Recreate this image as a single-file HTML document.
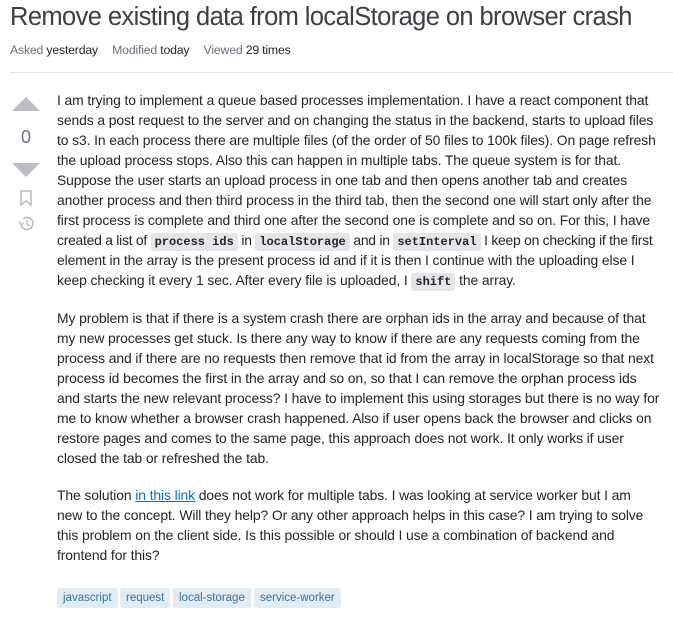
<!DOCTYPE html>
<html><head><meta charset="utf-8"><style>
body{margin:0;background:#fff;width:673px;height:620px;overflow:hidden;font-family:"Liberation Sans",sans-serif;color:#232629}
h1{position:absolute;left:10px;top:3px;margin:0;font-weight:normal;font-size:25.5px;color:#3b4045;white-space:nowrap;letter-spacing:-0.6px}
.meta{position:absolute;left:10px;top:43px;font-size:12.3px;color:#6a737c;white-space:nowrap;letter-spacing:-0.2px}
.meta b{font-weight:normal;color:#232629;margin-right:11px}
.hr{position:absolute;left:10px;top:72px;width:663px;height:1px;background:#e3e6e8}
.post{position:absolute;left:57px;width:620px;font-size:13.9px;line-height:20px;white-space:nowrap;letter-spacing:-0.1px}
code{font-family:"Liberation Mono",monospace;font-size:12px;line-height:1;background:#e3e6e8;padding:2px 4px;border-radius:3px;color:#232629;font-weight:bold;letter-spacing:0}
a{color:#0074cc;text-decoration:underline}
.tag{position:absolute;top:588px;height:20px;line-height:20px;background:#e1ecf4;color:#39739d;font-size:11.5px;padding:0 6px;border-radius:3px}
</style></head><body>
<h1>Remove existing data from localStorage on browser crash</h1>
<div class="meta">Asked <b>yesterday</b> Modified <b>today</b> Viewed <b>29 times</b></div>
<div class="hr"></div>
<svg style="position:absolute;left:10px;top:95px" width="34" height="140">
<path d="M2 16 L16 2 L30 16Z" fill="#babfc4"/>
<text x="16" y="48" font-size="18" fill="#6a737c" text-anchor="middle" font-family="Liberation Sans">0</text>
<path d="M2 68 L16 82 L30 68Z" fill="#babfc4"/>
<path d="M11 96 h10 v14 l-5 -4 l-5 4Z" fill="none" stroke="#babfc4" stroke-width="1.6"/>
<path d="M11 129 a6 6 0 1 0 2 -5" fill="none" stroke="#babfc4" stroke-width="1.6"/>
<path d="M9 126 l2 4 l3 -2" fill="none" stroke="#babfc4" stroke-width="1.4"/>
<path d="M17 125 v4 l3 2" fill="none" stroke="#babfc4" stroke-width="1.4"/>
</svg>
<div class="post" style="top:90px">I am trying to implement a queue based processes implementation. I have a react component that<br>sends a post request to the server and on changing the status in the backend, starts to upload files<br>to s3. In each process there are multiple files (of the order of 50 files to 100k files). On page refresh<br>the upload process stops. Also this can happen in multiple tabs. The queue system is for that.<br>Suppose the user starts an upload process in one tab and then opens another tab and creates<br>another process and then third process in the third tab, then the second one will start only after the<br>first process is complete and third one after the second one is complete and so on. For this, I have<br><span style="letter-spacing:-0.25px">created a list of <code>process ids</code> in <code>localStorage</code> and in <code>setInterval</code> I keep on checking if the first</span><br>element in the array is the present process id and if it is then I continue with the uploading else I<br>keep checking it every 1 sec. After every file is uploaded, I <code>shift</code> the array.</div>
<div class="post" style="top:308px">My problem is that if there is a system crash there are orphan ids in the array and because of that<br>my new processes get stuck. Is there any way to know if there are any requests coming from the<br>process and if there are no requests then remove that id from the array in localStorage so that next<br>process id becomes the first in the array and so on, so that I can remove the orphan process ids<br>and starts the new relevant process? I have to implement this using storages but there is no way for<br>me to know whether a browser crash happened. Also if user opens back the browser and clicks on<br>restore pages and comes to the same page, this approach does not work. It only works if user<br>closed the tab or refreshed the tab.</div>
<div class="post" style="top:485px">The solution <a>in this link</a> does not work for multiple tabs. I was looking at service worker but I am<br>new to the concept. Will they help? Or any other approach helps in this case? I am trying to solve<br>this problem on the client side. Is this possible or should I use a combination of backend and<br>frontend for this?</div>
<span class="tag" style="left:57px">javascript</span>
<span class="tag" style="left:120px">request</span>
<span class="tag" style="left:173px">local-storage</span>
<span class="tag" style="left:254px">service-worker</span>
</body></html>
